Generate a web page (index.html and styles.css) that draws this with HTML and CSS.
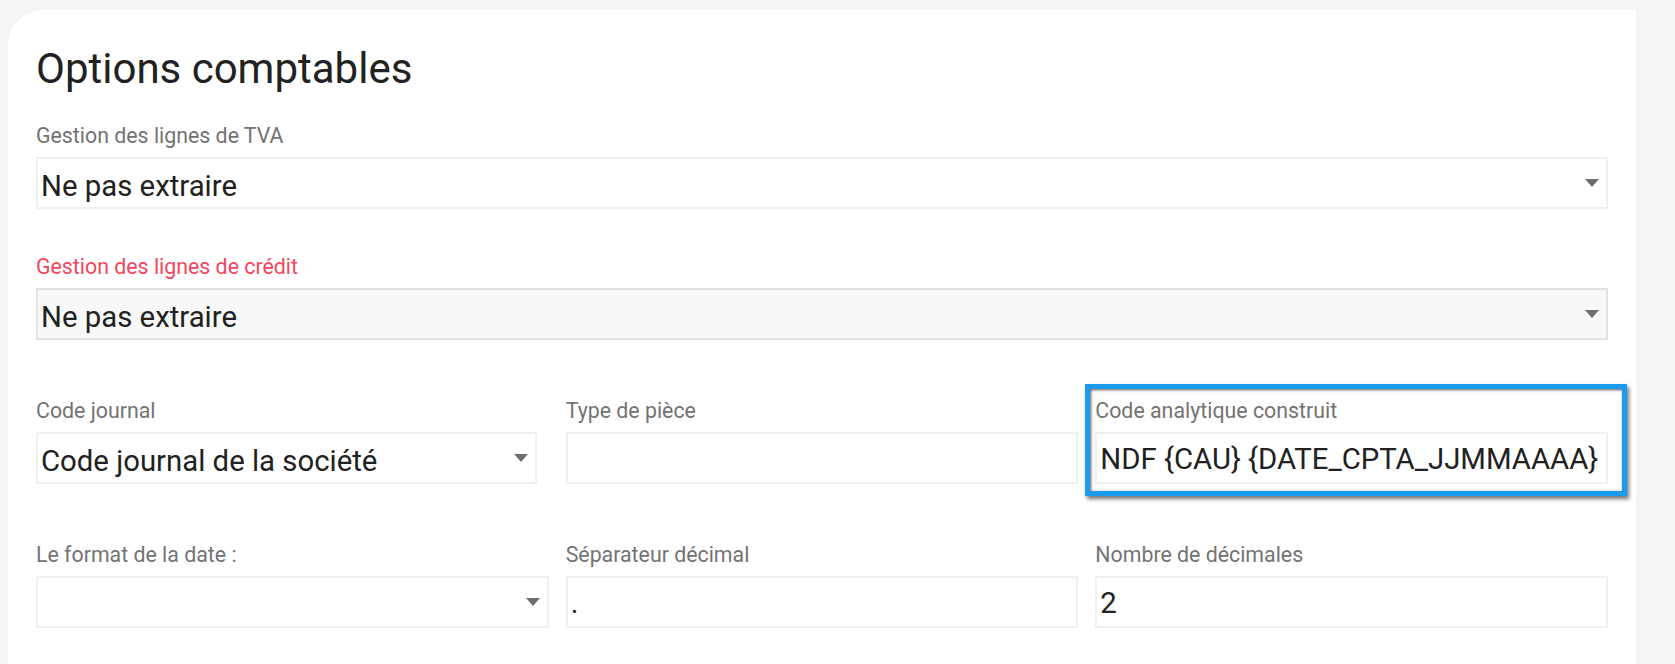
FILE: index.html
```html
<!DOCTYPE html>
<html lang="fr">
<head>
<meta charset="utf-8">
<title>Options comptables</title>
<link rel="stylesheet" href="styles.css">
</head>
<body>
<div class="page">
  <main class="card">
    <h1 class="title">Options comptables</h1>

    <div class="field row-first">
      <label class="label">Gestion des lignes de TVA</label>
      <div class="control select"><span class="value">Ne pas extraire</span><span class="caret"></span></div>
    </div>

    <div class="field row-second">
      <label class="label label-error">Gestion des lignes de crédit</label>
      <div class="control select select-alt"><span class="value">Ne pas extraire</span><span class="caret"></span></div>
    </div>

    <div class="grid row-third">
      <div class="field">
        <label class="label">Code journal</label>
        <div class="control select narrow"><span class="value">Code journal de la société</span><span class="caret"></span></div>
      </div>
      <div class="field">
        <label class="label">Type de pièce</label>
        <div class="control input"><span class="value"></span></div>
      </div>
      <div class="field highlighted">
        <label class="label">Code analytique construit</label>
        <div class="control input"><span class="value">NDF {CAU} {DATE_CPTA_JJMMAAAA}</span></div>
        <span class="highlight"></span>
      </div>
    </div>

    <div class="grid row-fourth">
      <div class="field">
        <label class="label">Le format de la date :</label>
        <div class="control select"><span class="value"></span><span class="caret"></span></div>
      </div>
      <div class="field">
        <label class="label">Séparateur décimal</label>
        <div class="control input"><span class="value">.</span></div>
      </div>
      <div class="field">
        <label class="label">Nombre de décimales</label>
        <div class="control input"><span class="value">2</span></div>
      </div>
    </div>
  </main>
</div>
</body>
</html>
```

FILE: styles.css
```css
html, body {
  margin: 0;
  padding: 0;
}

body {
  background: #f4f4f4;
  font-family: Roboto, "Noto Sans", "Liberation Sans", sans-serif;
  color: #212121;
  overflow: hidden;
}

.page {
  padding: 10px 39px 0 8px;
}

.card {
  background: #ffffff;
  border-top-left-radius: 35px;
  padding: 34px 28px 40px 28px;
  min-height: 654px;
  box-sizing: border-box;
}

.title {
  margin: 0;
  font-size: 42px;
  line-height: 50px;
  font-weight: 400;
  color: #212121;
}

.row-first {
  margin-top: 29px;
}

.row-second {
  margin-top: 45px;
}

.row-third {
  margin-top: 58px;
}

.row-fourth {
  margin-top: 58px;
}

.grid {
  display: grid;
  grid-template-columns: repeat(3, 1fr);
  column-gap: 17px;
}

.field {
  display: flex;
  flex-direction: column;
  align-items: stretch;
}

.label {
  display: block;
  font-size: 21.33px;
  line-height: 25px;
  color: #737373;
  margin-bottom: 9px;
  white-space: nowrap;
}

.label-error {
  color: #f0475f;
}

.control {
  display: flex;
  height: 52px;
  box-sizing: border-box;
  border: 2px solid #f0f0f0;
  background: #ffffff;
  padding: 0 7px 0 3px;
}

.value {
  flex: 1;
  align-self: flex-start;
  font-size: 29.33px;
  line-height: 42px;
  padding-top: 6px;
  color: #212121;
  white-space: nowrap;
  overflow: hidden;
}

.input .value {
  padding-top: 4px;
}

.select-alt {
  background: #f8f8f8;
  border-color: #e2e2e2;
}

.narrow {
  width: 501px;
}

.caret {
  align-self: center;
  width: 0;
  height: 0;
  border-left: 7px solid transparent;
  border-right: 7px solid transparent;
  border-top: 8px solid #6e6e6e;
  flex: none;
}

.highlighted {
  position: relative;
}

.highlight {
  position: absolute;
  top: -14px;
  right: -19px;
  bottom: -12px;
  left: -10px;
  border: 5px solid #1b9af2;
  box-shadow: 2px 3px 4px rgba(0, 0, 0, 0.55), inset 1px 1px 3px rgba(0, 0, 0, 0.65);
  pointer-events: none;
}
```
